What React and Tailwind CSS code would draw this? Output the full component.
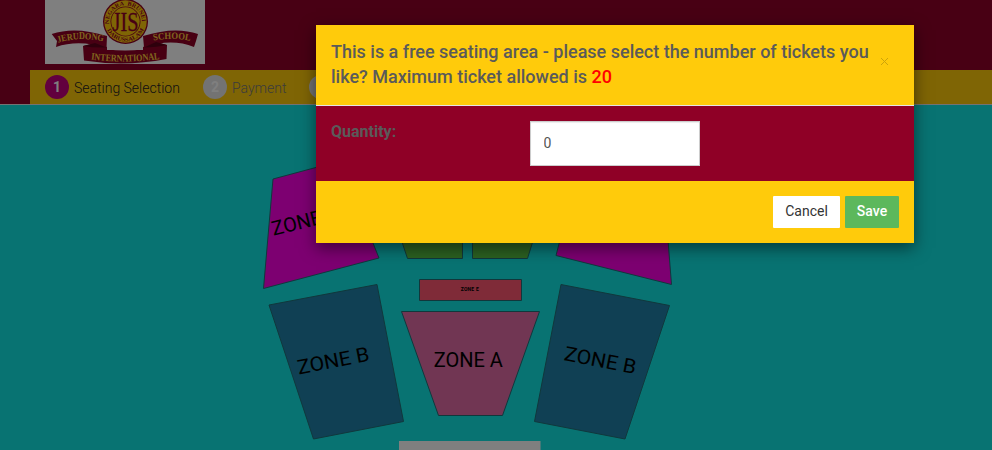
import React from "react";

function Logo() {
  return (
    <svg viewBox="0 0 160 64" className="block h-16 w-40 bg-white">
      <defs>
        <path id="arcTop" d="M64.5 25.3 A16.4 16.4 0 1 1 96.5 25.3" />
        <path id="arcBottom" d="M61.8 29 A20.2 20.2 0 0 0 99.2 29" />
        <path id="bandLeft" d="M12 43 Q33 36 62 42" />
        <path id="bandRight" d="M108.500 40.500 Q130 36.500 152 42.500" />
        <path id="bandBottom" d="M45.500 59.500 Q80 64 119 58.500" />
      </defs>
      <g fill="#900026">
        <path d="M6.700 34 Q30 26 62 36 L61.500 48 Q34 39 11 47 L12 41 Z" />
        <path d="M153 34 Q130 26 98 36 L99 47.500 Q126 38 149 47 L151 41 Z" />
        <path d="M38 46 L50 43 Q56 44 62 47 L62 50 L98 50 L98 47 Q108 43 111 42 L122 45 L121.500 59 Q80 67 39 60.500 Z" />
      </g>
      <path d="M38 46 Q48 48 61.500 47.500 L50 43 Z M122 45 Q112 47 99 47.500 L111 42 Z" fill="#5c0018" />
      <path d="M62 49.500 Q80 51.500 98 49.500 L98 42 L62 42 Z" fill="#fff" />
      <circle cx="80.5" cy="21.5" r="22.5" fill="#900026" />
      <circle cx="80.5" cy="21.5" r="21.2" fill="#ffcb0b" />
      <circle cx="80.5" cy="21.5" r="15" fill="#900026" />
      <circle cx="80.5" cy="21.5" r="14.2" fill="#ffcb0b" />
      <text x="80.5" y="31" textAnchor="middle" textLength="26" lengthAdjust="spacingAndGlyphs" fontSize="28" fill="#900026" stroke="#900026" strokeWidth=".3" className="font-['Liberation_Serif',serif]">JIS</text>
      <g className="font-['Liberation_Serif',serif] font-bold" fill="#900026" fontSize="5.8">
        <text><textPath href="#arcTop" startOffset="1.5" textLength="53" lengthAdjust="spacingAndGlyphs">NEGARA&#160;&#160;BRUNEI</textPath></text>
        <text><textPath href="#arcBottom" startOffset="1" textLength="46" lengthAdjust="spacingAndGlyphs">DARUSSALAM</textPath></text>
      </g>
      <g className="font-['Liberation_Serif',serif] font-bold" fill="#ffcb3b">
        <text fontSize="9.5"><textPath href="#bandLeft" startOffset="1" textLength="46" lengthAdjust="spacingAndGlyphs">JERUDONG</textPath></text>
        <text fontSize="9.5"><textPath href="#bandRight" textLength="37" lengthAdjust="spacingAndGlyphs">SCHOOL</textPath></text>
        <text fontSize="10"><textPath href="#bandBottom" startOffset="0.5" textLength="69" lengthAdjust="spacingAndGlyphs">INTERNATIONAL</textPath></text>
      </g>
    </svg>
  );
}

function Step({ number, label, active }) {
  return (
    <div className="flex items-center gap-[5px]">
      <span className={`flex size-6 items-center justify-center rounded-full pb-px text-sm font-bold text-white ${active ? "bg-[#c4007c]" : "bg-[#e6e6e6]"}`}>
        {number}
      </span>
      {label && (
        <span className={`pt-0.5 text-sm font-light whitespace-nowrap ${active ? "w-[106px] text-[#222]" : "w-[54px] text-[#777]"}`}>
          {label}
        </span>
      )}
    </div>
  );
}

function SeatMap() {
  return (
    <svg viewBox="0 0 992 345" className="block h-[345px] w-[992px] font-[Roboto,sans-serif]">
      <g transform="translate(0 -105)" stroke="#207078" strokeWidth="1">
        <path d="M273 179 L340 161 L379 258 L263.5 288.5 Z" fill="#fa00e2" />
        <path d="M560 240 L668 240 L671.5 284.5 L556 255.5 Z" fill="#fa00e2" />
        <path d="M400 236 L462.5 236 L462.5 258.500 L407.500 258.500 Z M472.500 236 L534.500 236 L527.500 258.500 L472.500 258.500 Z" fill="#58c242" />
        <path d="M419.500 279.500 H521.500 V300.500 H419.500 Z" fill="#fe5670" />
        <path d="M401.500 311.500 H539.500 L502.500 415.500 H438.500 Z" fill="#e26ca6" />
        <path d="M269 305 L377 284.500 L403.500 421.500 L313.500 439 Z" fill="#2080a8" />
        <path d="M561 284.500 L669.500 305.500 L625 439 L534.500 421.500 Z" fill="#2080a8" />
      </g>
      <rect x="399" y="336" width="141.5" height="9" fill="#fff" />
      <g fill="#000" fontSize="20" textAnchor="middle">
        <text transform="translate(307 122.500) rotate(-14)" textLength="69">ZONE C</text>
        <text transform="translate(334.500 262.500) rotate(-11)" textLength="73" lengthAdjust="spacingAndGlyphs">ZONE B</text>
        <text transform="translate(599 262) rotate(11)" textLength="73" lengthAdjust="spacingAndGlyphs">ZONE B</text>
        <text x="468.3" y="262.3" textLength="69">ZONE A</text>
        <text x="469.700" y="186" fontSize="5" fontWeight="bold" textLength="18">ZONE E</text>
      </g>
    </svg>
  );
}

function TicketDialog() {
  return (
    <section role="dialog" className="h-[218px] w-[598px] bg-[#ffcb0b] text-[#5a5a5a] shadow-[0_5px_15px_rgba(0,0,0,0.5)]">
      <header className="flex h-[81px] border-b border-[#e5e5e5] pt-[14px] pl-[15px]">
        <h4 className="w-[549px] text-lg leading-[25px] font-medium whitespace-nowrap">
          This is a free seating area - please select the number of tickets you
          <br />
          like? Maximum ticket allowed is <span className="text-[#ff0000]">20</span>
        </h4>
        <button aria-label="Close" className="mt-[18px] flex size-[9px] items-center justify-center">
          <svg viewBox="0 0 9 9" className="size-[9px]" fill="none" stroke="#cca30a" strokeWidth="1">
            <path d="M1 1 L8 8 M8 1 L1 8" />
          </svg>
        </button>
      </header>
      <div className="flex h-[75px] bg-[#8f0026] pt-[15px] pl-[15px]">
        <label className="w-[199px] text-base leading-[21px] font-bold">Quantity:</label>
        <input readOnly value="0" className="h-[45px] w-[170px] border border-[#ccc] bg-white px-[12.5px] pb-0.5 text-sm text-[#555] shadow-[inset_0_1px_1px_rgba(0,0,0,0.075)] outline-none" />
      </div>
      <footer className="flex justify-end gap-[5px] px-[15px] pt-[15px]">
        <button className="flex h-8 w-[67px] justify-center rounded-[1px] bg-white text-sm leading-[30px] text-[#333]">Cancel</button>
        <button className="flex h-8 w-[54px] justify-center rounded-[1px] bg-[#5cb85c] text-sm leading-[30px] font-medium text-white">Save</button>
      </footer>
    </section>
  );
}

export default function App() {
  return (
    <main className="relative h-[450px] w-[992px] overflow-hidden bg-[#10e6e4] font-[Roboto,sans-serif]">
      <div className="h-[105px] border-b border-[#e7e7e7] bg-[#900028]">
        <div className="h-[70px] pl-[45px]">
          <Logo />
        </div>
        <nav className="ml-[30px] flex h-[34px] items-center gap-[23px] bg-[#ffcb0b] pl-[15px]">
          <Step number={1} label="Seating Selection" active />
          <Step number={2} label="Payment" />
          <Step number={3} />
        </nav>
      </div>
      <SeatMap />
      <div className="absolute inset-0 bg-black/50 pt-[25px] pl-[316px]">
        <TicketDialog />
      </div>
    </main>
  );
}
